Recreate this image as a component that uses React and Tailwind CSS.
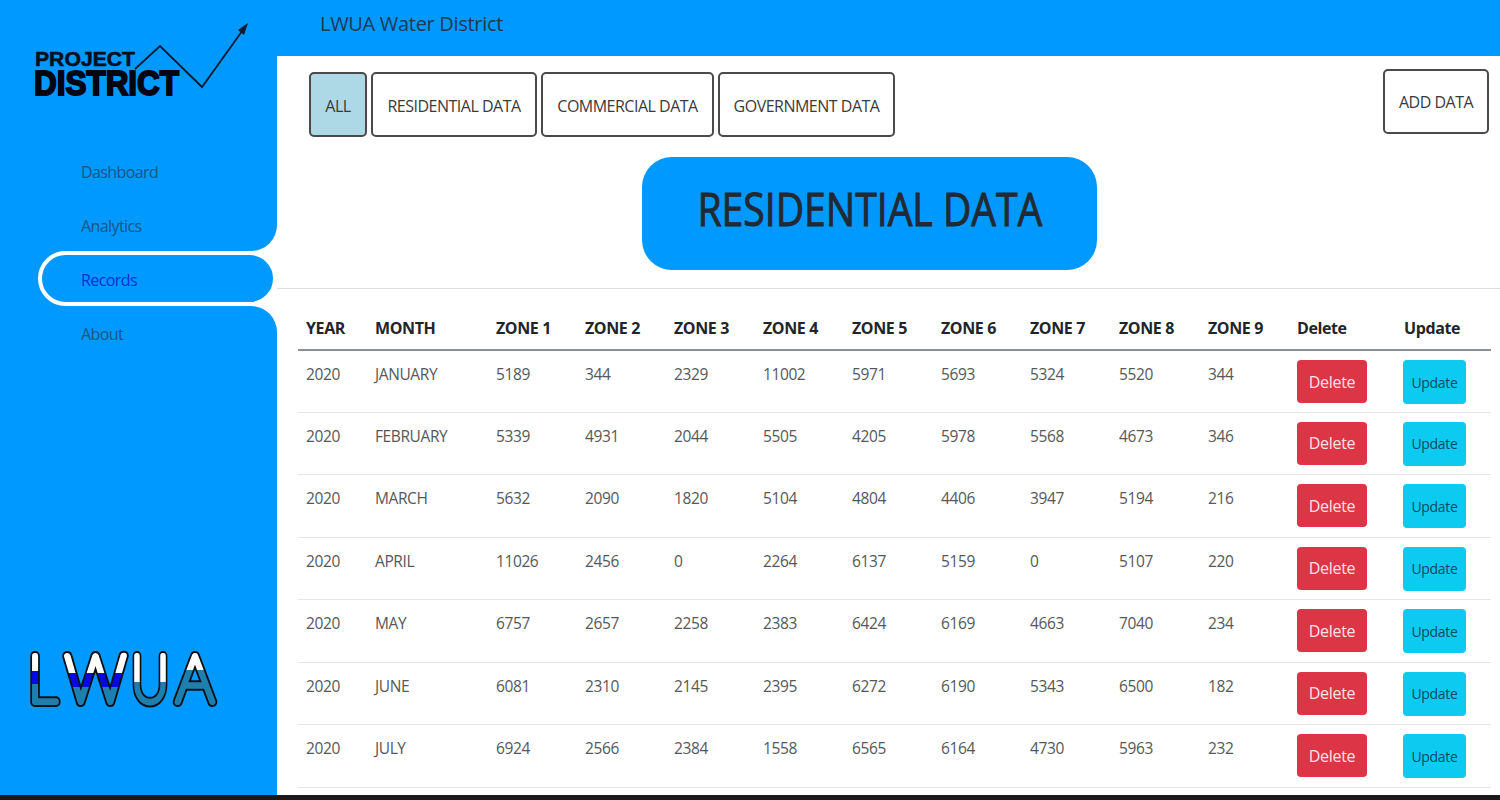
const FONT = "font-['Open_Sans','Noto_Sans',sans-serif]";

const rows = [
  ["JANUARY", 5189, 344, 2329, 11002, 5971, 5693, 5324, 5520, 344],
  ["FEBRUARY", 5339, 4931, 2044, 5505, 4205, 5978, 5568, 4673, 346],
  ["MARCH", 5632, 2090, 1820, 5104, 4804, 4406, 3947, 5194, 216],
  ["APRIL", 11026, 2456, 0, 2264, 6137, 5159, 0, 5107, 220],
  ["MAY", 6757, 2657, 2258, 2383, 6424, 6169, 4663, 7040, 234],
  ["JUNE", 6081, 2310, 2145, 2395, 6272, 6190, 5343, 6500, 182],
  ["JULY", 6924, 2566, 2384, 1558, 6565, 6164, 4730, 5963, 232],
];
const zones = [1, 2, 3, 4, 5, 6, 7, 8, 9];

function Logo() {
  return (
    <svg width="260" height="90" viewBox="0 15 260 90" className="block">
      <text x="35" y="66" fontFamily="Liberation Sans" fontWeight="700" fontSize="21" textLength="100" lengthAdjust="spacingAndGlyphs" fill="#06101f" stroke="#06101f" strokeWidth="0.6">PROJECT</text>
      <polyline points="135,69 160,46 202,87 245,27" fill="none" stroke="#0b1a33" strokeWidth="1.8" />
      <polygon points="248,23 238,30 244,35" fill="#0b1a33" />
      <text x="34" y="95" fontFamily="Liberation Sans" fontWeight="700" fontSize="35" textLength="145" lengthAdjust="spacingAndGlyphs" fill="#020612" stroke="#020612" strokeWidth="2">DISTRICT</text>
    </svg>
  );
}

function Letter({ id, x, w, ch, whiteEnd, blueEnd }) {
  return (
    <>
      <linearGradient id={id} gradientUnits="userSpaceOnUse" x1="0" y1="0" x2="0" y2="70">
        <stop offset={whiteEnd / 70} stopColor="#ffffff" />
        <stop offset={whiteEnd / 70} stopColor={blueEnd ? "#0808e0" : "#1d7fae"} />
        {blueEnd ? <stop offset={blueEnd / 70} stopColor="#0808e0" /> : null}
        {blueEnd ? <stop offset={blueEnd / 70} stopColor="#1d7fae" /> : null}
      </linearGradient>
      <text x={x} y="57" textLength={w} lengthAdjust="spacingAndGlyphs" fontFamily="Lato" fontWeight="100" fontSize="65" stroke="#0a1014" strokeWidth="10" strokeLinejoin="round" strokeLinecap="round" fill="#0a1014">{ch}</text>
      <text x={x} y="57" textLength={w} lengthAdjust="spacingAndGlyphs" fontFamily="Lato" fontWeight="100" fontSize="65" stroke={`url(#${id})`} strokeWidth="6" strokeLinejoin="round" strokeLinecap="round" fill={`url(#${id})`}>{ch}</text>
    </>
  );
}

function LwuaLogo() {
  return (
    <svg width="240" height="70" viewBox="0 0 240 70" className="block">
      <Letter id="gl" x="28" w="29" ch="L" whiteEnd={26} blueEnd={39} />
      <Letter id="gw" x="65" w="61" ch="W" whiteEnd={28} blueEnd={42} />
      <Letter id="gu" x="131" w="38" ch="U" whiteEnd={37} />
      <Letter id="ga" x="176" w="38" ch="A" whiteEnd={25} />
    </svg>
  );
}

function Sidebar() {
  const item = "flex items-center pl-[81px] text-[16px] tracking-[-0.6px] text-[#1a5585]";
  return (
    <aside className="flex h-full w-[277px] shrink-0 flex-col bg-white">
      <div className="h-[251px] rounded-br-[26px] bg-[#0099ff]">
        <div className="h-[145px] pt-[15px]">
          <Logo />
        </div>
        <div className={`${item} h-[54px]`}>Dashboard</div>
        <div className={`${item} h-[52px] pt-[2px]`}>Analytics</div>
      </div>
      <div className="bg-[linear-gradient(to_right,#0099ff_50%,#ffffff_50%)] pl-[38px]">
        <div className="flex h-[55px] items-center rounded-[28px] border-4 border-white bg-[#0099ff] pl-[39px] pt-[2px] text-[16px] tracking-[-0.6px] text-[#0f2fd6]">Records</div>
      </div>
      <div className="flex-1 rounded-tr-[26px] bg-[#0099ff]">
        <div className={`${item} h-[56px]`}>About</div>
        <div className="mt-[283px]">
          <LwuaLogo />
        </div>
      </div>
    </aside>
  );
}

function TabButton({ children, active, className = "" }) {
  return (
    <button className={`h-[65px] rounded-[5px] border-2 border-[#4a4a4a] text-[16px] tracking-[-0.5px] text-[#3a3a3a] ${active ? "bg-[#add8e6]" : "bg-white"} ${className}`}>
      {children}
    </button>
  );
}

const thCls = "px-2 pt-[18px] text-[16px] font-bold tracking-[-0.4px]";
const tdCls = "px-2 pt-[12px] align-top text-[15.5px] tracking-[-0.4px]";

function DataTable() {
  return (
    <table className="ml-[21px] w-[1193px] table-fixed border-collapse text-[16px] text-[#212529]">
      <colgroup>
        <col className="w-[69px]" />
        <col className="w-[121px]" />
        {zones.map((z) => <col key={z} className="w-[89px]" />)}
        <col className="w-[107px]" />
        <col className="w-[95px]" />
      </colgroup>
      <thead>
        <tr className="h-[61px] border-b-2 border-[#8e9194] text-left">
          <th className={thCls}>YEAR</th>
          <th className={thCls}>MONTH</th>
          {zones.map((z) => (
            <th key={z} className={thCls}>ZONE {z}</th>
          ))}
          <th className={thCls}>Delete</th>
          <th className={thCls}>Update</th>
        </tr>
      </thead>
      <tbody>
        {rows.map((r) => (
          <tr key={r[0]} className="h-[62.45px] border-b border-[#e4e6e8] text-[#55585b]">
            <td className={tdCls}>2020</td>
            {r.map((v, i) => (
              <td key={i} className={tdCls}>{v}</td>
            ))}
            <td className="px-2 pt-[9px] align-top">
              <button className="h-[43px] w-[70px] rounded-[4px] bg-[#dc3545] text-[16px] tracking-[-0.3px] text-[#fbe3e5]">Delete</button>
            </td>
            <td className="px-2 pt-[9px] align-top">
              <button className="-ml-px h-[44px] w-[63px] rounded-[4px] bg-[#0dcaf0] text-[14px] tracking-[-0.3px] text-[#0b4a66]">Update</button>
            </td>
          </tr>
        ))}
      </tbody>
    </table>
  );
}

export default function App() {
  return (
    <div className={`h-[800px] w-full overflow-hidden bg-[#1b181b] ${FONT}`}>
      <div className="flex h-[795px] w-full">
        <Sidebar />
        <div className="flex min-w-0 flex-1 flex-col bg-white">
          <header className="flex h-[56px] shrink-0 items-center bg-[#0099ff] pb-[9px] pl-[43px] text-[20px] tracking-[-0.3px] text-[#1d3a55]">
            LWUA Water District
          </header>
          <main className="flex-1 overflow-hidden">
            <div className="flex items-start justify-between pl-[32px] pr-[11px] pt-[13px]">
              <div className="mt-[3px] flex gap-[4px]">
                <TabButton active className="w-[58px] pt-[2px]">ALL</TabButton>
                <TabButton className="w-[166px] pt-[2px]">RESIDENTIAL DATA</TabButton>
                <TabButton className="w-[173px] pt-[2px]">COMMERCIAL DATA</TabButton>
                <TabButton className="w-[177px] pt-[2px]">GOVERNMENT DATA</TabButton>
              </div>
              <TabButton className="w-[106px]">ADD DATA</TabButton>
            </div>
            <div className="ml-[365px] mt-[20px] flex h-[113px] w-[455px] items-center justify-center rounded-[30px] bg-[#0099ff] pb-[11px] text-[#212a33]">
              <span className="inline-block scale-x-[0.85] whitespace-nowrap text-[46px] [-webkit-text-stroke:1px_#212a33]">RESIDENTIAL DATA</span>
            </div>
            <div className="mt-[18px] h-px bg-[#dcdfe2]" />
            <DataTable />
          </main>
        </div>
      </div>
    </div>
  );
}
